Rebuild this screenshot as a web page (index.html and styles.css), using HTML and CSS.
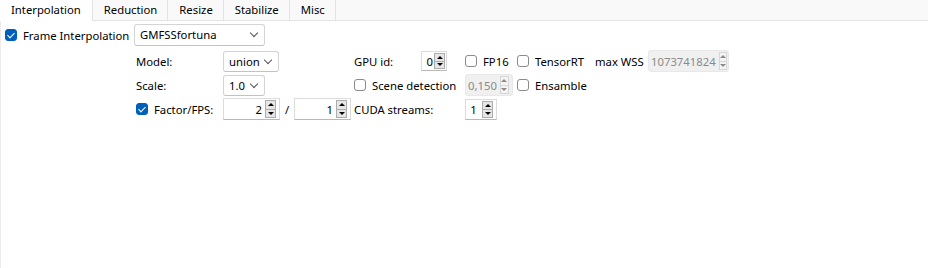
FILE: index.html
```html
<!DOCTYPE html>
<html lang="en">

<head>
    <meta charset="UTF-8">
    <meta name="viewport" content="width=device-width, initial-scale=1.0">
    <title>Interpolation</title>
    <link rel="stylesheet" href="styles.css">
</head>

<body>
    <div class="tabs">
        <div class="tab active">Interpolation</div>
        <div class="tab">Reduction</div>
        <div class="tab">Resize</div>
        <div class="tab">Stabilize</div>
        <div class="tab">Misc</div>
    </div>

    <div class="pane">
        <div class="top-row">
            <label class="check main-check"><span class="box on"></span>Frame Interpolation</label>
            <div class="combo wide">GMFSSfortuna<span class="chev"></span></div>
        </div>

        <div class="grid">
            <!-- row: model -->
            <div class="cell">Model:</div>
            <div class="cell"><div class="combo model">union<span class="chev"></span></div></div>
            <div class="cell">
                <span class="gpu-label">GPU id:</span>
                <div class="spin gpu"><span class="val">0</span><span class="btns"><i class="up"></i><i class="down"></i></span></div>
            </div>
            <div class="cell"><label class="check"><span class="box"></span>FP16</label></div>
            <div class="cell"><label class="check"><span class="box"></span>TensorRT</label></div>
            <div class="cell">max WSS</div>
            <div class="cell">
                <div class="spin wss disabled"><span class="val">1073741824</span><span class="btns"><i class="up"></i><i class="down"></i></span></div>
            </div>

            <!-- row: scale -->
            <div class="cell">Scale:</div>
            <div class="cell"><div class="combo scale">1.0<span class="chev"></span></div></div>
            <div class="cell"><label class="check"><span class="box"></span>Scene detection</label></div>
            <div class="cell">
                <div class="spin scene disabled"><span class="val">0,150</span><span class="btns"><i class="up"></i><i class="down"></i></span></div>
            </div>
            <div class="cell span3"><label class="check"><span class="box"></span>Ensamble</label></div>

            <!-- row: factor -->
            <div class="cell"><label class="check"><span class="box on"></span>Factor/FPS:</label></div>
            <div class="cell">
                <div class="spin factor"><span class="val">2</span><span class="btns"><i class="up"></i><i class="down"></i></span></div>
                <span class="slash">/</span>
                <div class="spin factor"><span class="val">1</span><span class="btns"><i class="up"></i><i class="down"></i></span></div>
            </div>
            <div class="cell">CUDA streams:</div>
            <div class="cell span4">
                <div class="spin cuda"><span class="val">1</span><span class="btns"><i class="up"></i><i class="down"></i></span></div>
            </div>
        </div>
    </div>
</body>

</html>
```

FILE: styles.css
```css
body {
    margin: 0;
    font-family: "Noto Sans", "Open Sans", sans-serif;
    font-size: 11.3px;
    color: #000;
    background: #fff;
}

.tabs {
    display: flex;
    height: 20px;
    background: #f9f9f9;
    border-bottom: 1px solid #e3e3e3;
}

.tab {
    padding: 0 10px 0 11px;
    line-height: 20px;
    border-right: 1px solid #e3e3e3;
}

.tab.active {
    background: #fff;
    height: 21px;
    padding: 0 11px 0 11px;
}

.pane {
    height: 244px;
    border-left: 1px solid #ececec;
    border-bottom: 1px solid #ececec;
    padding-top: 3px;
}

.top-row {
    display: flex;
    align-items: center;
    height: 22px;
    margin-bottom: 3px;
}

.check {
    display: flex;
    align-items: center;
    white-space: nowrap;
}

.box {
    width: 10px;
    height: 10px;
    border: 1px solid #8b8b8b;
    border-radius: 3px;
    margin-right: 6px;
    background: #fff;
    position: relative;
}

.box.on {
    background: #005fb8;
    border-color: #005fb8;
}

.box.on::after {
    content: "";
    position: absolute;
    left: 3px;
    top: 1px;
    width: 3px;
    height: 6px;
    border: solid #fff;
    border-width: 0 1.5px 1.5px 0;
    transform: rotate(45deg);
}

.main-check {
    margin-left: 4px;
    width: 129px;
}

.combo {
    position: relative;
    box-sizing: border-box;
    height: 22px;
    line-height: 20px;
    padding-left: 5px;
    border: 1px solid #d4d4d4;
    border-bottom-color: #c2c2c2;
    border-radius: 3px;
    background: #fff;
}

.combo.wide {
    width: 131px;
}

.combo.model {
    width: 56px;
    height: 21px;
    line-height: 19px;
}

.combo.scale {
    width: 42px;
    height: 21px;
    line-height: 19px;
}

.chev {
    position: absolute;
    right: 7px;
    top: 5px;
    width: 5px;
    height: 5px;
    border: solid #555;
    border-width: 0 1px 1px 0;
    transform: rotate(45deg);
}

.grid {
    display: grid;
    grid-template-columns: 87px 131px 111px 52px 78px 53px auto;
    grid-auto-rows: 24px;
    margin-left: 135px;
}

.cell {
    display: flex;
    align-items: center;
    white-space: nowrap;
}

.span3 {
    grid-column: span 3;
}

.span4 {
    grid-column: span 4;
}

.gpu-label {
    width: 67px;
}

.spin {
    display: flex;
    box-sizing: border-box;
    height: 22px;
    border: 1px solid #dcdcdc;
    border-bottom-color: #b8b8b8;
    background: #fff;
    padding: 1px 3px 1px 2px;
}

.spin .val {
    flex: 1;
    text-align: right;
    line-height: 19px;
    padding-right: 3px;
}

.btns {
    display: flex;
    flex-direction: column;
    width: 11px;
}

.btns i {
    flex: 1;
    box-sizing: border-box;
    border: 1px solid #adadad;
    background: #e6e6e6;
    display: flex;
    align-items: center;
    justify-content: center;
}

.btns i.up {
    border-bottom-width: 0;
}

.btns i.up::after,
.btns i.down::after {
    content: "";
    border-left: 3px solid transparent;
    border-right: 3px solid transparent;
}

.btns i.up::after {
    border-bottom: 3px solid #000;
}

.btns i.down::after {
    border-top: 3px solid #000;
}

.spin.factor {
    width: 57px;
}

.slash {
    width: 14px;
    text-align: center;
}

.spin.gpu {
    width: 26px;
    height: 20px;
    padding-right: 1px;
}

.spin.gpu .val {
    padding-right: 1px;
}

.spin.gpu .val,
.spin.cuda .val {
    line-height: 17px;
}

.spin.cuda {
    width: 32px;
    height: 21px;
}

.spin.cuda .val {
    text-align: center;
}

.spin.disabled {
    background: #f0f0f0;
    border-color: #e8e8e8;
    color: #8a8a8a;
    border-radius: 3px;
}

.spin.disabled .btns i {
    border-color: #d6d6d6;
    background: #f4f4f4;
}

.spin.disabled .btns i.up::after {
    border-bottom-color: #8a8a8a;
}

.spin.disabled .btns i.down::after {
    border-top-color: #8a8a8a;
}

.spin.scene {
    width: 48px;
}

.spin.wss {
    width: 81px;
}
```
